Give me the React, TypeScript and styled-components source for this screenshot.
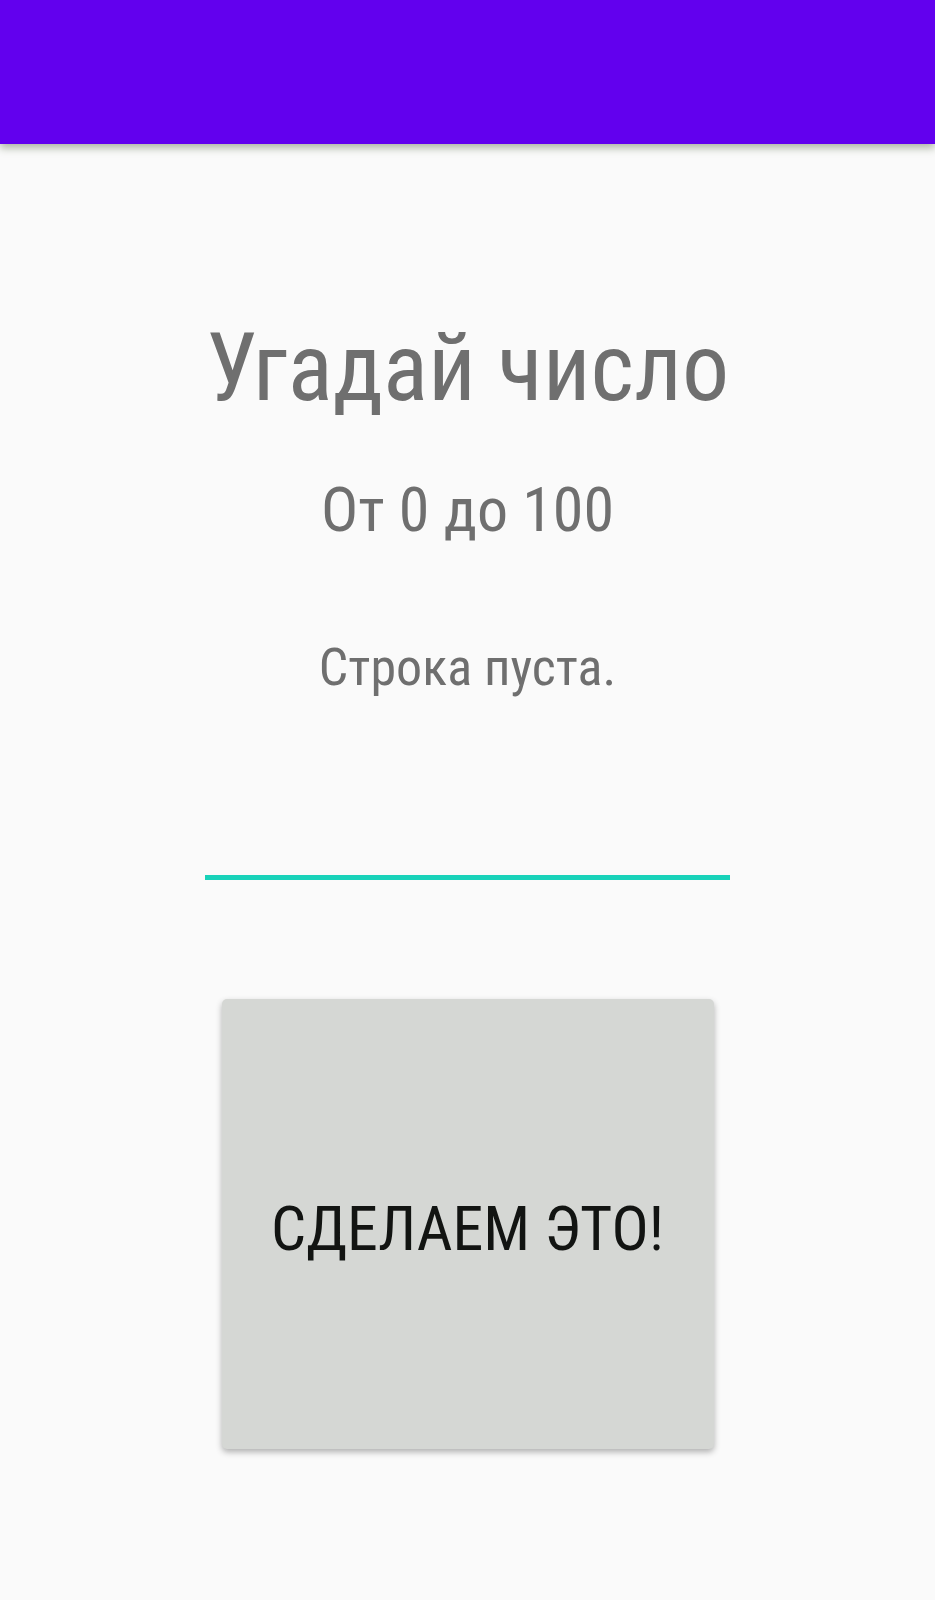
import React from "react";
import styled, { createGlobalStyle } from "styled-components";

const GlobalStyle = createGlobalStyle`
  * { box-sizing: border-box; }
  body { margin: 0; background: #fafafa; font-family: "Roboto Condensed", Roboto, sans-serif; }
`;
const Screen = styled.div`
  min-height: 100vh;
  display: flex;
  flex-direction: column;
`;
const AppBar = styled.header`
  height: 144px;
  background: #6200ee;
  box-shadow: 0 4px 8px rgba(60, 80, 40, 0.4);
`;
const Content = styled.main`
  display: flex;
  flex-direction: column;
  align-items: center;
  padding: 168px 16px 60px;
  color: #6f6f6f;
`;
const Title = styled.h1`
  margin: 0;
  font-size: 94px;
  line-height: 112px;
  font-weight: 400;
`;
const Range = styled.p`
  margin: 48px 0 0;
  font-size: 62px;
  line-height: 76px;
`;
const Message = styled.p`
  margin: 88px 0 0;
  font-size: 52px;
  line-height: 64px;
`;
const GuessInput = styled.input`
  margin-top: 80px;
  width: 525px;
  max-width: 100%;
  height: 100px;
  border: 0;
  border-bottom: 5px solid #18d2b9;
  background: transparent;
  outline: 0;
  font: inherit;
  font-size: 52px;
  text-align: center;
`;
const SubmitButton = styled.button`
  margin-top: 119px;
  width: 492px;
  max-width: 100%;
  height: 450px;
  padding: 8px 0 0;
  border: 0;
  border-radius: 5px;
  background: #d5d7d4;
  box-shadow: 0 3px 6px rgba(0, 0, 0, 0.3);
  color: #121412;
  font: inherit;
  font-size: 62px;
`;

export default function App() {
  return (
    <Screen>
      <GlobalStyle />
      <AppBar />
      <Content>
        <Title>Угадай число</Title>
        <Range>От 0 до 100</Range>
        <Message>Строка пуста.</Message>
        <GuessInput type="text" inputMode="numeric" aria-label="Число" />
        <SubmitButton type="button">СДЕЛАЕМ ЭТО!</SubmitButton>
      </Content>
    </Screen>
  );
}
